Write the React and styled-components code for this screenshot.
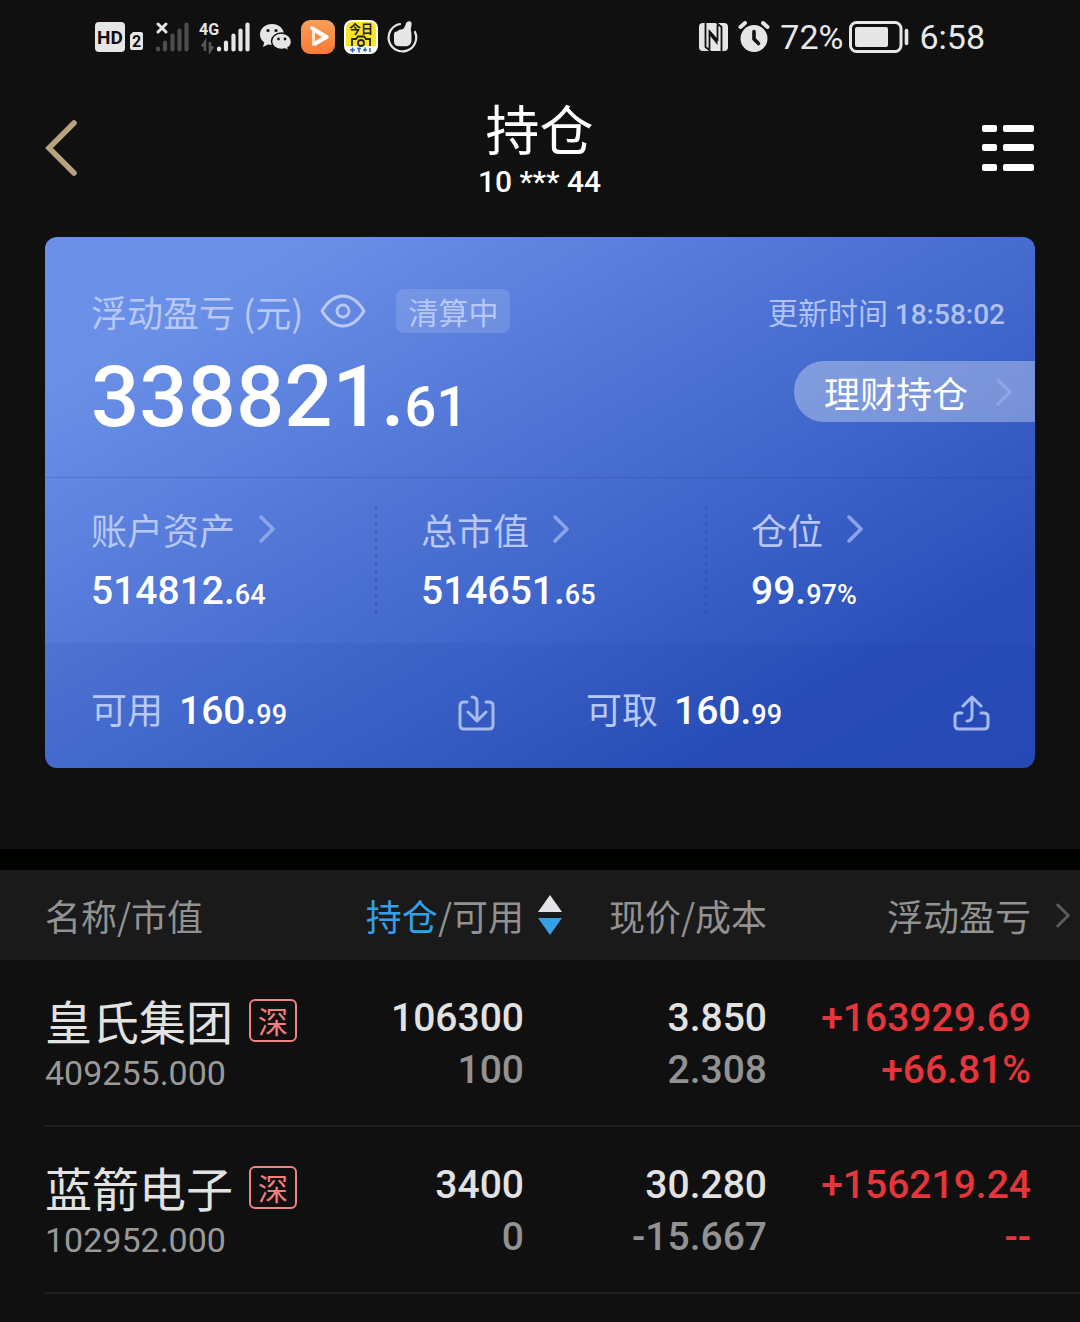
import React from "react";
import styled, { createGlobalStyle, css } from "styled-components";

const GlobalStyle = createGlobalStyle`
  * { box-sizing: border-box; }
  body {
    margin: 0;
    background: #101010;
    color: #fff;
    font-family: "Noto Sans CJK SC", "Liberation Sans", sans-serif;
  }
  button {
    margin: 0;
    padding: 0;
    border: 0;
    background: none;
    color: inherit;
    font: inherit;
    cursor: pointer;
  }
  svg { display: block; flex: none; }
`;

const numerals = css`
  font-family: Roboto, "Noto Sans CJK SC", sans-serif;
  font-weight: 500;
`;

const Page = styled.main`
  min-height: 100vh;
  background: #101010;
`;

/* ---------- status bar ---------- */

const StatusBar = styled.div`
  display: flex;
  justify-content: space-between;
  align-items: center;
  height: 74px;
  padding: 0 95px;
`;

const StatusGroup = styled.div`
  display: flex;
  align-items: center;
  gap: ${(p) => p.$gap}px;
`;

const StatusText = styled.span`
  font: 400 34px/40px Roboto, "Liberation Sans", sans-serif;
  color: #e8e8e8;
`;

const HdIcon = () => (
  <svg width="48" height="34" viewBox="0 0 48 34" role="img" aria-label="HD 2">
    <rect x="0" y="2" width="30" height="30" rx="4" fill="#e6e6e6" />
    <text x="15" y="24" textAnchor="middle" fontFamily="Roboto, sans-serif" fontWeight="700" fontSize="19" fill="#101010">HD</text>
    <path d="M38 12h8q2 0 2 2v14q0 2-2 2h-9q-2 0-2-2V15z" fill="#e6e6e6" />
    <text x="41.500" y="27" textAnchor="middle" fontFamily="Roboto, sans-serif" fontWeight="700" fontSize="16" fill="#101010">2</text>
  </svg>
);

const Bars = ({ x, color }) => (
  <g stroke={color} strokeWidth="4.200" strokeLinecap="round">
    <path d={`M${x + 2} 29.500v-1M${x + 9} 29.500v-7M${x + 16.5} 29.500v-14M${x + 23.5} 29.500v-19M${x + 30.5} 29.500v-25`} />
  </g>
);

const NoSignalIcon = () => (
  <svg width="34" height="34" viewBox="0 0 34 34" role="img" aria-label="no signal">
    <Bars x={0} color="#4c4c4c" />
    <path d="M2 4l8 8M10 4l-8 8" stroke="#e6e6e6" strokeWidth="3" strokeLinecap="round" />
  </svg>
);

const SignalIcon = () => (
  <svg width="52" height="34" viewBox="0 0 52 34" role="img" aria-label="4G signal">
    <Bars x={18} color="#e6e6e6" />
    <text x="0" y="15" fontFamily="Roboto, sans-serif" fontWeight="700" fontSize="16" fill="#e6e6e6">4G</text>
    <path d="M6 31V22L3 26.500M11 22v9l3-4.500" fill="none" stroke="#565656" strokeWidth="2.600" />
  </svg>
);

const WechatIcon = () => (
  <svg width="32" height="34" viewBox="0 0 32 34" role="img" aria-label="WeChat">
    <path d="M12 4C5.300 4 0 8.800 0 14.500c0 3.200 1.600 6 4.200 7.900L3 27l5-2.500c1.200.3 2.500.5 4 .5 6.700 0 12-4.700 12-10.500S18.700 4 12 4z" fill="#e6e6e6" />
    <path d="M21.500 13c-5.700 0-10 3.800-10 8.300s4.300 8.200 10 8.200c1.300 0 2.500-.2 3.600-.5L29 31.500l-1-3.500c2.300-1.500 3.500-3.700 3.500-6.200 0-4.500-4.300-8.800-10-8.800z" fill="#e6e6e6" stroke="#101010" strokeWidth="1.500" />
    <circle cx="8" cy="10.500" r="1.600" fill="#101010" /><circle cx="16" cy="10.500" r="1.600" fill="#101010" />
    <circle cx="18.500" cy="19" r="1.400" fill="#101010" /><circle cx="25" cy="19" r="1.400" fill="#101010" />
  </svg>
);

const PlayIcon = () => (
  <svg width="34" height="34" viewBox="0 0 34 34" role="img" aria-label="video">
    <defs>
      <linearGradient id="play" x1="0" y1="0" x2="0" y2="1">
        <stop offset="0" stopColor="#f7a05a" /><stop offset="1" stopColor="#fa7a33" />
      </linearGradient>
    </defs>
    <rect width="34" height="34" rx="9" fill="url(#play)" />
    <path d="M11 8v18l15-9z" fill="#fde3cf" />
    <path d="M11 8l15 9-12 7" fill="none" stroke="#fff" strokeWidth="3.500" strokeLinejoin="round" strokeLinecap="round" />
    <path d="M14 13l6.500 4-6.500 4z" fill="#fa8a45" />
  </svg>
);

const CameraIcon = () => (
  <svg width="34" height="34" viewBox="0 0 34 34" role="img" aria-label="今日水印相机">
    <rect width="34" height="34" rx="8" fill="#fdfdf4" />
    <path d="M2 26V9q0-7 7-7h16q7 0 7 7v17z" fill="#f7e32c" />
    <text x="17" y="14" textAnchor="middle" fontFamily="'Noto Sans CJK SC', sans-serif" fontWeight="700" fontSize="12" fill="#25230f">今日</text>
    <path d="M8 26v-7h4l2-2.500h6l2 2.500h4v7" fill="none" stroke="#25230f" strokeWidth="1.800" />
    <circle cx="17" cy="23" r="3" fill="#f7e32c" stroke="#25230f" strokeWidth="1.800" />
    <path d="M6 30h5M8.500 27.500v5M13 28.500h4M15 27.500v5M19 30h4M21 27.500v4M26 28v4" stroke="#2864c8" strokeWidth="1.500" />
  </svg>
);

const ThumbIcon = () => (
  <svg width="31" height="34" viewBox="0 0 31 34" role="img" aria-label="thumb">
    <path d="M13 4A13.800 13.800 0 1 0 28 12" fill="none" stroke="#e6e6e6" strokeWidth="2.200" strokeLinecap="round" />
    <path d="M7 14c0-2 2-2.800 3.500-2.800 1-1.700 3-2 4.500-1.700 2-.8 3-3 4-6 .8-2.300 3.500-2.800 4.800-1.800s.9 3.500.2 6c-.5 2 .5 4 .5 7v5c0 4-2 6.500-6 6.500h-5.500c-4 0-6-1.500-6-4.500z" fill="#e6e6e6" />
  </svg>
);

const NfcIcon = () => (
  <svg width="29" height="30" viewBox="0 0 29 30" role="img" aria-label="NFC">
    <rect x="0" y="1" width="29" height="28" rx="4" fill="#e6e6e6" />
    <path d="M6.500 1v24l5 4M22.500 29V5l-5-4" fill="none" stroke="#101010" strokeWidth="1.800" />
    <path d="M10.500 27V9.500L18.500 19M18.500 3v16" fill="none" stroke="#101010" strokeWidth="1.800" />
    <path d="M10.500 13l8 10v-6l-8-9z" fill="#101010" />
  </svg>
);

const AlarmIcon = () => (
  <svg width="32" height="32" viewBox="0 0 32 32" role="img" aria-label="alarm">
    <circle cx="16" cy="17.500" r="13.500" fill="#e6e6e6" />
    <path d="M2.500 6l4.500-4M29.500 6L25 2" stroke="#e6e6e6" strokeWidth="4" strokeLinecap="round" />
    <path d="M16 10.500v7.500l4.500 4.500" fill="none" stroke="#101010" strokeWidth="3.600" strokeLinecap="round" strokeLinejoin="round" />
  </svg>
);

const BatteryIcon = () => (
  <svg width="60" height="32" viewBox="0 0 60 32" role="img" aria-label="battery">
    <rect x="1.500" y="1.500" width="50.500" height="29" rx="6" fill="none" stroke="#e6e6e6" strokeWidth="3" />
    <rect x="6" y="6" width="33" height="20" rx="2" fill="#e6e6e6" />
    <path d="M57.500 9.500v13" stroke="#e6e6e6" strokeWidth="3.600" strokeLinecap="round" />
  </svg>
);

/* ---------- title bar ---------- */

const NavBar = styled.header`
  display: flex;
  justify-content: space-between;
  align-items: flex-start;
  padding: 21px 46px 34px 45px;
`;

const NavButton = styled.button`
  display: flex;
  align-items: center;
  width: 52px;
  height: 106px;
`;

const TitleBlock = styled.div`
  text-align: center;
`;

const Title = styled.h1`
  margin: 0;
  font-size: 54px;
  line-height: 66px;
  font-weight: 400;
`;

const Account = styled.div`
  ${numerals}
  font-size: 30px;
  line-height: 42px;
`;

/* ---------- asset card ---------- */

const Card = styled.section`
  margin: 0 45px 81px;
  border-radius: 12px;
  overflow: hidden;
  background: linear-gradient(150deg, #6c90e9 0%, #6a8fe7 15%, #5378d8 38%, #3c63c9 62%, #2a4fba 82%, #274ab8 100%);
`;

const Summary = styled.div`
  display: flex;
  justify-content: space-between;
  height: 241px;
  padding: 50px 0 0 46px;
  border-bottom: 1px solid rgba(20, 50, 140, 0.2);
`;

const SummaryAside = styled.div`
  display: flex;
  flex-direction: column;
  align-items: flex-end;
  gap: 26px;
`;

const LabelRow = styled.div`
  display: flex;
  align-items: center;
  height: 48px;
`;

const Label = styled.span`
  font-size: 36px;
  line-height: 48px;
  color: #b7c8f6;
`;

const EyeButton = styled.button`
  margin: 0 30px 0 17px;
`;

const Badge = styled.span`
  padding: 0 12px;
  border-radius: 8px;
  background: rgba(255, 255, 255, 0.13);
  font-size: 30px;
  line-height: 44px;
  color: #b7c8f6;
`;

const Updated = styled.div`
  height: 48px;
  padding-right: 30px;
  font-size: 30px;
  line-height: 48px;
  color: #b0c2f2;
  time {
    ${numerals}
    font-size: 28px;
  }
`;

const Pill = styled.button`
  display: flex;
  align-items: center;
  gap: 28px;
  height: 61px;
  padding: 0 23px 0 30px;
  border-radius: 30px 0 0 30px;
  background: rgba(255, 255, 255, 0.32);
  font-size: 36px;
  line-height: 60px;
`;

const BigAmount = styled.div`
  ${numerals}
  font-size: 85px;
  line-height: 124px;
  small { font-size: 56px; }
`;

const Amount = styled.div`
  ${numerals}
  font-size: 39px;
  line-height: 58px;
  small { font-size: 27px; }
`;

const Stats = styled.div`
  display: grid;
  grid-template-columns: repeat(3, 1fr);
  height: 165px;
  padding: 28px 0;
`;

const Stat = styled.div`
  padding-left: 46px;
  background: ${(p) =>
    p.$divided
      ? "repeating-linear-gradient(rgba(40, 60, 150, 0.4) 0 3px, transparent 3px 8px) left top / 2px 108px no-repeat"
      : "none"};
`;

const StatLink = styled.button`
  display: flex;
  align-items: center;
  gap: 24px;
  height: 46px;
  margin-bottom: 10px;
`;

const Balances = styled.div`
  display: grid;
  grid-template-columns: 1fr 1fr;
  height: 125px;
  background: rgba(20, 50, 150, 0.09);
`;

const Balance = styled.div`
  display: flex;
  align-items: center;
  justify-content: space-between;
  padding: 14px 45px 0 46px;
`;

const BalanceText = styled.div`
  display: flex;
  align-items: baseline;
  gap: 16px;
`;

const Chevron = ({ color = "#8da5e6", width = 16, height = 28 }) => (
  <svg width={width} height={height} viewBox="0 0 16 28" aria-hidden="true">
    <path d="M2 2l12 12L2 26" fill="none" stroke={color} strokeWidth="3.500" strokeLinecap="round" strokeLinejoin="round" />
  </svg>
);

const Money = ({ as: Tag = Amount, whole, cents }) => (
  <Tag>
    {whole}.<small>{cents}</small>
  </Tag>
);

/* ---------- holdings ---------- */

const Table = styled.table`
  display: block;
  border-top: 21px solid #000200;
  thead, tbody { display: block; }
  th, td { padding: 0; font-weight: inherit; text-align: right; }
`;

const rowGrid = css`
  display: grid;
  grid-template-columns: 255fr 224fr 38px 205fr 264fr 49px;
`;

const HeadRow = styled.tr`
  ${rowGrid}
  align-items: center;
  height: 90px;
  padding-left: 45px;
  background: #1a1a1a;
  color: #929292;
  font-size: 36px;
  line-height: 48px;
`;

const Row = styled.tr`
  ${rowGrid}
  height: 167px;
  margin-left: 45px;
  border-bottom: 2px solid #201f1b;
`;

const HeadCell = styled.th`
  && { text-align: ${(p) => (p.$start ? "left" : "right")}; }
  grid-column: ${(p) => p.$col};
  white-space: nowrap;
`;

const HeadButton = styled.button`
  display: inline-flex;
  align-items: center;
  gap: ${(p) => p.$gap}px;
  padding-right: ${(p) => p.$end || 0}px;
  vertical-align: top;
`;

const Accent = styled.span`
  color: #34a0ea;
`;

const NameCell = styled.td`
  && {
    padding-top: 34px;
    text-align: left;
  }
  grid-column: 1;
`;

const NameLine = styled.div`
  display: flex;
  align-items: center;
  gap: 16px;
  height: 52px;
`;

const StockName = styled.span`
  font-size: 47px;
  line-height: 52px;
  color: #e2e2e2;
  white-space: nowrap;
`;

const Market = styled.span`
  width: 48px;
  height: 43px;
  border: 2px solid #f08484;
  border-radius: 6px;
  font-size: 30px;
  line-height: 38px;
  text-align: center;
  color: #f57f7f;
`;

const MarketValue = styled.div`
  ${numerals}
  font-weight: 400;
  font-size: 34px;
  line-height: 54px;
  color: #999;
`;

const NumberCell = styled.td`
  && {
    ${numerals}
    padding-top: 32px;
  }
  grid-column: ${(p) => p.$col};
  font-size: 39px;
  line-height: 52px;
  color: ${(p) => (p.$gain ? "#e6353b" : "#e2e2e2")};
`;

const Secondary = styled.div`
  color: ${(p) => (p.$gain ? "inherit" : "#929292")};
`;

const stocks = [
  { name: "皇氏集团", market: "深", value: "409255.000", held: "106300", free: "100", price: "3.850", cost: "2.308", profit: "+163929.69", rate: "+66.81%" },
  { name: "蓝箭电子", market: "深", value: "102952.000", held: "3400", free: "0", price: "30.280", cost: "-15.667", profit: "+156219.24", rate: "--" },
];

const stats = [
  { label: "账户资产", whole: "514812", cents: "64" },
  { label: "总市值", whole: "514651", cents: "65" },
  { label: "仓位", whole: "99", cents: "97%" },
];

export default function App() {
  return (
    <Page>
      <GlobalStyle />
      <StatusBar>
        <StatusGroup $gap={9}>
          <StatusGroup $gap={13}>
            <HdIcon />
            <NoSignalIcon />
          </StatusGroup>
          <SignalIcon />
          <WechatIcon />
          <PlayIcon />
          <CameraIcon />
          <ThumbIcon />
        </StatusGroup>
        <StatusGroup $gap={10}>
          <NfcIcon />
          <AlarmIcon />
          <StatusGroup $gap={6}>
            <StatusText>72%</StatusText>
            <BatteryIcon />
          </StatusGroup>
          <StatusText>6:58</StatusText>
        </StatusGroup>
      </StatusBar>

      <NavBar>
        <NavButton aria-label="返回">
          <svg width="32" height="56" viewBox="0 0 32 56" aria-hidden="true">
            <path d="M29 3L4 28l25 25" fill="none" stroke="#b9a37f" strokeWidth="5.500" strokeLinecap="round" />
          </svg>
        </NavButton>
        <TitleBlock>
          <Title>持仓</Title>
          <Account>10 *** 44</Account>
        </TitleBlock>
        <NavButton aria-label="菜单">
          <svg width="52" height="48" viewBox="0 0 52 48" fill="#fff" aria-hidden="true">
            <rect x="0" y="1" width="15" height="7" rx="2" /><rect x="21" y="1" width="31" height="7" rx="2" />
            <rect x="0" y="20" width="15" height="7" rx="2" /><rect x="21" y="20" width="31" height="7" rx="2" />
            <rect x="0" y="40" width="15" height="7" rx="2" /><rect x="21" y="40" width="31" height="7" rx="2" />
          </svg>
        </NavButton>
      </NavBar>

      <Card>
        <Summary>
          <div>
            <LabelRow>
              <Label>浮动盈亏 (元)</Label>
              <EyeButton aria-label="隐藏金额">
                <svg width="46" height="34" viewBox="0 0 46 34" fill="none" stroke="#b7c8f6" strokeWidth="3" aria-hidden="true">
                  <path d="M2 17C8 7 15 2 23 2s15 5 21 15c-6 10-13 15-21 15S8 27 2 17z" strokeLinejoin="round" />
                  <circle cx="23" cy="17" r="6" />
                </svg>
              </EyeButton>
              <Badge>清算中</Badge>
            </LabelRow>
            <Money as={BigAmount} whole="338821" cents="61" />
          </div>
          <SummaryAside>
            <Updated>更新时间 <time>18:58:02</time></Updated>
            <Pill>
              理财持仓
              <Chevron />
            </Pill>
          </SummaryAside>
        </Summary>

        <Stats>
          {stats.map((s, i) => (
            <Stat key={s.label} $divided={i > 0}>
              <StatLink>
                <Label>{s.label}</Label>
                <Chevron />
              </StatLink>
              <Money whole={s.whole} cents={s.cents} />
            </Stat>
          ))}
        </Stats>

        <Balances>
          <Balance>
            <BalanceText>
              <Label>可用</Label>
              <Money whole="160" cents="99" />
            </BalanceText>
            <button aria-label="转入">
              <svg width="37" height="36" viewBox="0 0 37 36" fill="none" stroke="#a6baf0" strokeWidth="3" strokeLinecap="round" strokeLinejoin="round" aria-hidden="true">
                <path d="M9 7H6Q2 7 2 11v19q0 4 4 4h25q4 0 4-4V11q0-4-4-4h-3" />
                <path d="M14 2q5 0 5 5v17M10 17l9 9 9-9" />
              </svg>
            </button>
          </Balance>
          <Balance>
            <BalanceText>
              <Label>可取</Label>
              <Money whole="160" cents="99" />
            </BalanceText>
            <button aria-label="转出">
              <svg width="37" height="36" viewBox="0 0 37 36" fill="none" stroke="#a6baf0" strokeWidth="3" strokeLinecap="round" strokeLinejoin="round" aria-hidden="true">
                <path d="M9 18H6q-4 0-4 4v8q0 4 4 4h25q4 0 4-4v-8q0-4-4-4h-3" />
                <path d="M14 26q5 0 5-5V2M10 11l9-9 9 9" />
              </svg>
            </button>
          </Balance>
        </Balances>
      </Card>

      <Table>
        <thead>
          <HeadRow>
            <HeadCell $col="1" $start>名称/市值</HeadCell>
            <HeadCell $col="2 / 4">
              <HeadButton $gap={14}>
                <span><Accent>持仓</Accent>/可用</span>
                <svg width="24" height="40" viewBox="0 0 24 40" aria-hidden="true">
                  <path d="M12 0l12 17H0z" fill="#e4e4e8" />
                  <path d="M12 40L0 23h24z" fill="#34a0ea" />
                </svg>
              </HeadButton>
            </HeadCell>
            <HeadCell $col="4">现价/成本</HeadCell>
            <HeadCell $col="5 / 7">
              <HeadButton $gap={25} $end={10}>
                浮动盈亏
                <Chevron color="#5c5c5c" width={14} height={25} />
              </HeadButton>
            </HeadCell>
          </HeadRow>
        </thead>
        <tbody>
          {stocks.map((s) => (
            <Row key={s.name}>
              <NameCell>
                <NameLine>
                  <StockName>{s.name}</StockName>
                  <Market>{s.market}</Market>
                </NameLine>
                <MarketValue>{s.value}</MarketValue>
              </NameCell>
              <NumberCell $col="2">
                <div>{s.held}</div>
                <Secondary>{s.free}</Secondary>
              </NumberCell>
              <NumberCell $col="4">
                <div>{s.price}</div>
                <Secondary>{s.cost}</Secondary>
              </NumberCell>
              <NumberCell $col="5" $gain>
                <div>{s.profit}</div>
                <Secondary $gain>{s.rate}</Secondary>
              </NumberCell>
            </Row>
          ))}
        </tbody>
      </Table>
    </Page>
  );
}
